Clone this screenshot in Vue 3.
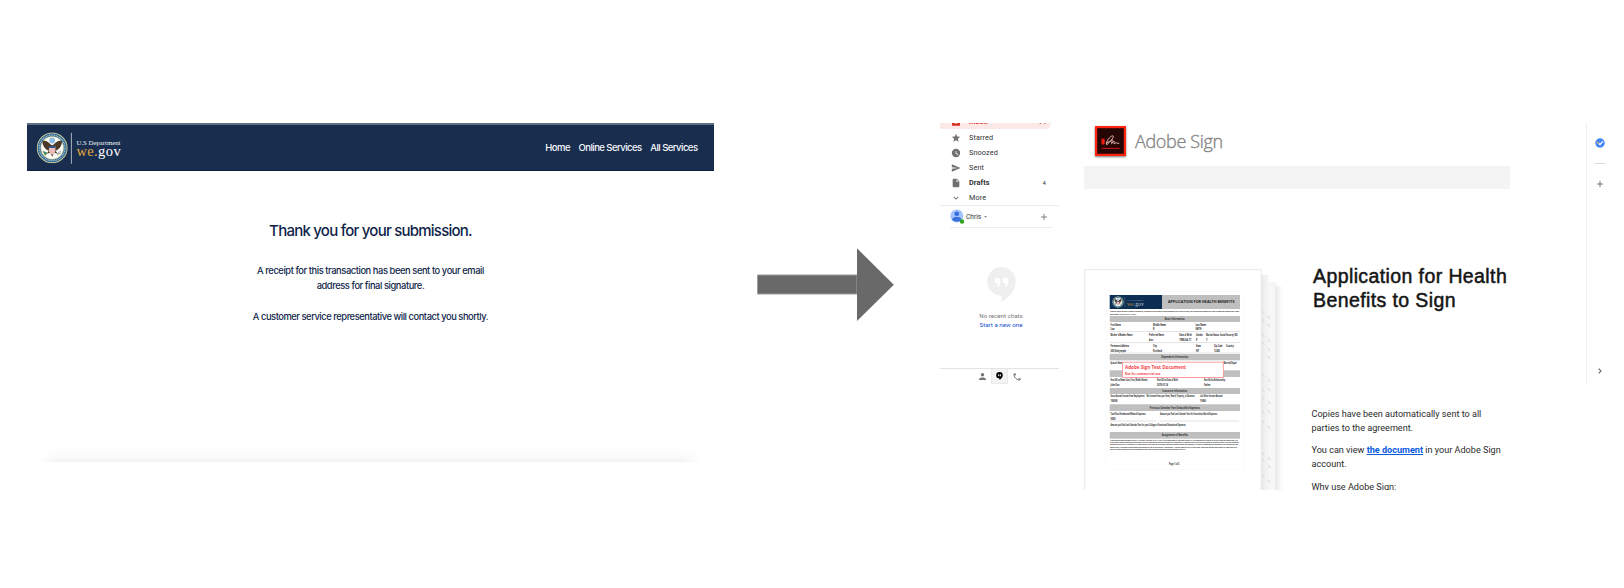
<script setup>
const folders = [
  { name: 'Starred', icon: 'M12 17.3l6.2 3.7-1.6-7L22 9.2l-7.2-.6L12 2 9.2 8.6 2 9.2 7.5 14l-1.7 7z' },
  { name: 'Snoozed', icon: 'M12 2a10 10 0 1 0 0 20 10 10 0 0 0 0-20zm4.5 14.5L11 13V7h1.8v5.2l4.5 2.7z' },
  { name: 'Sent', icon: 'M2 21l21-9L2 3v7l15 2-15 2z' },
  { name: 'Drafts', icon: 'M6 2a2 2 0 0 0-2 2v16a2 2 0 0 0 2 2h12a2 2 0 0 0 2-2V8l-6-6zm7 7V3.500l5.500 5.500z', bold: true, count: 4 },
  { name: 'More', icon: 'M7.400 8.600L12 13.200l4.600-4.600L18 10l-6 6-6-6z' },
]

// x, baseline, width, text
const labels = [
  [1110.5, 325.6, 10.5, 'First Name'],
  [1153, 325.6, 13, 'Middle Name'],
  [1195.5, 325.600, 10.500, 'Last Name'],
  [1110.5, 330, 4, 'Lisa'],
  [1153, 330, 1.5, 'R'],
  [1195.5, 330, 6, 'SMITH'],
  [1110.5, 336.3, 22, "Mother's Maiden Name"],
  [1149, 336.3, 15, 'Preferred Name'],
  [1179.3, 336.3, 12.500, 'Date of Birth'],
  [1196, 336.3, 7, 'Gender'],
  [1206, 336.3, 13, 'Marital Status'],
  [1220, 336.3, 17.500, 'Social Security NO'],
  [1149, 341, 4, 'Ann'],
  [1179.3, 341, 12, '1980-04-11'],
  [1196, 341, 1.5, 'F'],
  [1206, 341, 1.5, '1'],
  [1110.5, 347, 18.5, 'Permanent Address'],
  [1153, 347, 4, 'City'],
  [1196, 347, 5, 'State'],
  [1214, 347, 8.500, 'Zip Code'],
  [1226, 347, 8, 'Country'],
  [1110.5, 351.700, 15.500, '200 Dalrymple'],
  [1153, 351.7, 9, 'Portland'],
  [1196, 351.7, 3, 'NY'],
  [1214, 351.7, 6, '12345'],
  [1110.5, 364.300, 12, "Spouse's Name"],
  [1223.5, 364.300, 13, 'Married/Equal'],
  [1110.5, 381, 37, 'Non-VA Ins Name (Last, First, Middle Name)'],
  [1157, 381, 21, 'Non VA Ins Date of Birth'],
  [1204, 381, 21, 'Non VA Ins Relationship'],
  [1110.5, 385.500, 9, 'John Doe'],
  [1157, 385.5, 11, '2019-01-14'],
  [1204, 385.5, 6.500, 'Father'],
  [1110.5, 397.300, 34, 'Gross Annual Income from Employment'],
  [1146.5, 397.3, 48, 'Net Income from your Farm, Ranch, Property, or Business'],
  [1200, 397.300, 22.500, 'List Other Income Amount'],
  [1110.5, 402.300, 7, '100000'],
  [1200, 402.300, 6, '10000'],
  [1110.5, 414.700, 35, 'Total Non-Reimbursed Medical Expenses'],
  [1160, 414.7, 57, 'Amount you Paid Last Calendar Year for Funeral and Burial Expenses'],
  [1110.5, 419.500, 5, '5000'],
  [1110.5, 425.5, 75, 'Amount you Paid Last Calendar Year for your College or Vocational Educational Expenses'],
]
const bars = [
  [316, 6, 'Basic Information', 20],
  [354, 6.300, 'Dependent Information', 27],
  [370.3, 6.700, '', 0],
  [388, 6, 'Insurance Information', 25],
  [404.300, 6.700, 'Previous Calendar Year Deductible Expenses', 50],
  [432, 6.700, 'Assignment of Benefits', 26],
]
const rules = [[1110, 331.6, 130], [1110, 342.600, 130], [1110, 353, 130], [1110, 421, 46], [1160, 421, 79]]
const prose = [
  [311.900, 129, 'Federal law provides criminal penalties, including a fine and/or imprisonment for up to 5 years, for concealing a material fact or making a materially false'],
  [314.600, 26, 'statement. (See 18 U.S.C. 1001)'],
  [441, 128, 'I understand that pursuant to 38 U.S.C. section 1729 and 42 U.S.C. 2651, the Department of Veterans Affairs (VA) is authorized to recover or collect from my health plan (HP)'],
  [443.200, 129, 'or any other legally responsible third party for the reasonable charges of nonservice-connected VA medical care or services furnished or provided to me. I hereby authorize'],
  [445.400, 128, 'payment directly to VA from any HP under which I am covered (including coverage provided under my spouse’s HP) that is responsible for payment of the charges for my'],
  [447.600, 127, 'medical care, including benefits otherwise payable to me or my spouse. Furthermore, I hereby assign to the VA any claim I may have against any person or entity who is or'],
  [449.800, 76, 'may be legally responsible for the payment of the cost of medical services provided to me by the VA.'],
]
const marks = [
  [1262, 313], [1262, 321], [1262, 336], [1262, 344], [1262, 376], [1262, 391], [1262, 399], [1262, 413], [1262, 422], [1262, 454], [1262, 461], [1262, 477],
  [1268, 318], [1268, 326], [1268, 341], [1268, 350], [1268, 358], [1268, 381], [1268, 390], [1268, 403], [1268, 412], [1268, 428], [1268, 459], [1268, 467], [1268, 482],
]
</script>

<template>
  <main class="board">
    <svg class="defs" width="0" height="0">
      <symbol id="seal" viewBox="0 0 32 32">
        <circle cx="16" cy="16" r="15.700" fill="#c9c69a" />
        <circle cx="16" cy="16" r="14.700" fill="#2f6a94" />
        <circle cx="16" cy="16" r="13" fill="none" stroke="#b5cdd8" stroke-width="1.300" stroke-dasharray=".9 .8" />
        <circle cx="16" cy="16" r="11.600" fill="#fdfdfa" stroke="#c8b878" stroke-width=".6" />
        <circle cx="16" cy="8.500" r="3" fill="#8fbce0" />
        <path d="M15 13 C12 10 10 8 6 9 C6 13 8 17 12.500 19 L10.500 22 L14 21 L16 25 L18 21 L21.500 22 L19.500 19 C24 17 26 13 26 9 C22 8 20 10 17 13z" fill="#4d3927" />
        <path d="M12.700 14h6.600v5c0 2-2 3.500-3.300 4-1.300-.5-3.300-2-3.300-4z" fill="#efbdb8" />
        <path d="M12.700 14h6.600v2.200h-6.600z" fill="#34578c" />
        <path d="M6 19l5 2-2 3z" fill="#3f8052" />
        <path d="M21 22l4-3M21 23l4-2" stroke="#8a8a86" stroke-width=".8" />
      </symbol>
      <symbol id="hangout" viewBox="0 0 29 35">
        <path d="M14.500 0a14.300 14.300 0 0 1 14.300 14.400C28.800 23 22 31 14.500 34.500V28.800A14.400 14.400 0 0 1 14.500 0z" />
        <path fill="#fff" d="M8 11h5.200v5c0 2-1.200 3.500-3.200 4v-1.800c1-.3 1.300-1 1.300-2H8zM16 11h5.200v5c0 2-1.200 3.500-3.200 4v-1.800c1-.3 1.300-1 1.300-2H16z" />
      </symbol>
    </svg>

    <section class="gov">
      <header class="bar">
        <svg class="logo" width="90" height="34" viewBox="36 130.500 90 34">
          <use href="#seal" x="36.500" y="131.700" width="31.400" height="31.400" />
          <path d="M71.400 132.300v31" stroke="#b8c1cd" stroke-width=".9" />
          <text x="76.500" y="144.500" font-size="6.600" fill="#f2f4f8" textLength="44" lengthAdjust="spacingAndGlyphs">U.S Department</text>
          <text x="76.500" y="155.700" font-size="14.500" fill="#e4a93d" textLength="21">we.</text>
          <text x="98" y="155.700" font-size="14.500" fill="#fff" textLength="22.700">gov</text>
        </svg>
        <nav>
          <a>Home</a><a>Online Services</a><a>All Services</a>
        </nav>
      </header>
      <div class="message">
        <h1>Thank you for your submission.</h1>
        <p class="receipt">A receipt for this transaction has been sent to your email<br /><span>address for final signature.</span></p>
        <p class="rep">A customer service representative will contact you shortly.</p>
      </div>
      <div class="fade"></div>
    </section>

    <svg class="arrow" width="137" height="74" viewBox="757 247.500 137 74">
      <path d="M757.500 274.500H857v19H757.500z" fill="#696969" stroke="#9c9c9c" stroke-width="1" />
      <path d="M857 247.800L893.800 284.200 857 320.600z" fill="#696969" />
    </svg>

    <aside class="mail">
      <div class="inbox">
        <svg width="8" height="3"><path d="M0 0h8v2.200q0 .5-.5.500h-7Q0 2.700 0 2.200z" fill="#d93025" /><path d="M2.700 0h2.600q-1.300 1.400-2.600 0z" fill="#fff" /></svg>
        <b>Inbox</b><b class="n">74</b>
      </div>
      <div v-for="f in folders" :key="f.name" class="folder" :class="{ bold: f.bold }">
        <svg width="10" height="10" viewBox="0 0 24 24"><path :d="f.icon" fill="#717171" fill-rule="evenodd" /></svg>
        <span>{{ f.name }}</span><i v-if="f.count">{{ f.count }}</i>
      </div>
      <div class="user">
        <svg width="14" height="15" viewBox="950 208.500 14 15">
          <circle cx="956.800" cy="215.400" r="6.500" fill="#a2c3fb" />
          <circle cx="956.800" cy="213.300" r="2.400" fill="#3970dd" />
          <path d="M952.200 219.600c0-2.700 2.500-3 4.600-3s4.600.3 4.600 3c-2.500 2.300-6.700 2.300-9.200 0z" fill="#3970dd" />
          <circle cx="962" cy="221" r="2.200" fill="#2fa81f" />
        </svg>
        <span>Chris</span>
        <svg class="caret" width="3" height="2"><path d="M0 0h3L1.500 1.800z" fill="#888" /></svg>
        <svg class="add" width="6" height="6"><path d="M3 0v6M0 3h6" stroke="#777" stroke-width=".9" /></svg>
      </div>
      <div class="chats">
        <svg width="29" height="35" fill="#efefef"><use href="#hangout" width="29" height="35" /></svg>
        <p>No recent chats</p>
        <a>Start a new one</a>
      </div>
      <div class="tabs">
        <span><svg width="7" height="7" viewBox="4 4 16 16"><path d="M12 12a4 4 0 1 0 0-8 4 4 0 0 0 0 8zm0 2c-2.700 0-8 1.300-8 4v2h16v-2c0-2.700-5.300-4-8-4z" fill="#757575" /></svg></span>
        <span class="on"><svg width="7" height="8"><use href="#hangout" width="7" height="8" /></svg></span>
        <span><svg width="8" height="8" viewBox="0 0 8 8"><path d="M1.500.8C.5 2 1 3.500 2.700 5.200S6 7.500 7.200 6.500" fill="none" stroke="#757575" stroke-width="1" /><path d="M1.300.5l1.300 1.800M5.700 5.300l1.800 1.300" stroke="#757575" stroke-width="1.600" /></svg></span>
      </div>
    </aside>

    <section class="adobe">
      <div class="brand">
        <svg width="31" height="30" viewBox="0 0 31 30">
          <path d="M0 0h31v30H0z" fill="#ff2410" /><path d="M2.200 2.200h26.600v25.600H2.200z" fill="#260605" />
          <path d="M6.500 12.800H9.700V17.500L8.100 19 6.500 17.500z" fill="#ee1b13" />
          <path d="M11.500 18.500C11 15.500 15 10 17.700 9.800c2 .2-1 4.200-3 6.200l-2.500 2.300c-1 .6-1.500-1.800.8-2.200 2-.3 3.500-2.600 4.300-2.300.5.500-1.300 3.500-.6 3.800.6 0 1.500-2.700 2.300-2.600.6.300-.5 2.800.2 2.800s1.200-1.200 2-1.100c.6.200.5.700 3 .7" fill="none" stroke="#f2c5c0" stroke-width=".9" />
          <path d="M6.800 22.400h17.800" stroke="#e01c14" stroke-width=".9" />
        </svg>
        <span>Adobe Sign</span>
      </div>
      <div class="band"></div>
      <div class="agreement">
        <svg class="paper" width="204" height="224" viewBox="1082 266 204 224">
          <defs>
            <linearGradient id="edge"><stop offset="0" stop-color="#e3e3e3" /><stop offset="1" stop-color="#fff" /></linearGradient>
            <linearGradient id="fold"><stop offset="0" stop-color="#e6e6e6" /><stop offset="1" stop-color="#f8f8f8" /></linearGradient>
            <filter id="soft" x="-50%" width="200%"><feGaussianBlur stdDeviation="1.2" /></filter>
          </defs>
          <path d="M1274 286h8.500v210h-8.500z" fill="url(#edge)" filter="url(#soft)" />
          <path d="M1262 283h13.500v210H1262z" fill="#f7f7f7" stroke="#ededed" stroke-width=".7" />
          <path d="M1261 275.500h6.500v218h-6.500z" fill="url(#fold)" stroke="#ececec" stroke-width=".6" />
          <path v-for="m in marks" :key="m.join()" :d="`M${m[0]} ${m[1] - 2}l2.300 3`" stroke="#dadada" stroke-width="1.100" />
          <path d="M1084.700 269.700h176.500V492H1084.700z" fill="#fff" stroke="#e9e9e9" />
          <path d="M1106 291.500h137.500V469H1106z" fill="#fff" stroke="#fafafa" />
          <path d="M1109.700 295H1162v14h-52.300z" fill="#0d2e53" />
          <path d="M1162 295h78v14h-78z" fill="#bfbfbf" />
          <use href="#seal" x="1112.200" y="296.200" width="11.600" height="11.600" />
          <path d="M1124.700 297v10" stroke="#8492a5" stroke-width=".3" />
          <text class="serif" x="1127" y="301.300" font-size="2.500" fill="#94a0b0" textLength="16.500">U.S Department</text>
          <text class="serif" x="1127" y="305.500" font-size="5.500" fill="#b98b39" textLength="8">we.</text>
          <text class="serif" x="1135.200" y="305.500" font-size="5.500" fill="#cbd2dc" textLength="8.500">gov</text>
          <text x="1168" y="303.300" font-size="4.200" font-weight="700" fill="#222" textLength="66.500" lengthAdjust="spacingAndGlyphs">APPLICATION FOR HEALTH BENEFITS</text>
          <g v-for="b in bars" :key="b[0]">
            <rect x="1109.700" :y="b[0]" width="130.300" :height="b[1]" fill="#bfbfbf" />
            <text v-if="b[2]" :x="1174.800 - b[3] / 2" :y="b[0] + 4.200" font-size="2.800" font-weight="700" fill="#333" :textLength="b[3]" lengthAdjust="spacingAndGlyphs">{{ b[2] }}</text>
          </g>
          <path v-for="r in rules" :key="r.join()" :d="`M${r[0]} ${r[1]}h${r[2]}`" stroke="#c4c4c4" stroke-width=".5" />
          <text v-for="(l, i) in labels" :key="i" :x="l[0]" :y="l[1]" font-size="2.800" font-weight="700" fill="#222" :textLength="l[2]" lengthAdjust="spacingAndGlyphs">{{ l[3] }}</text>
          <text v-for="p in prose" :key="p[0]" x="1110" :y="p[0]" font-size="2.300" font-weight="700" fill="#222" :textLength="p[1]" lengthAdjust="spacingAndGlyphs">{{ p[2] }}</text>
          <text x="1169" y="465.400" font-size="2.700" font-weight="700" fill="#333" textLength="10.500" lengthAdjust="spacingAndGlyphs">Page 1 of 2</text>
          <rect x="1122.500" y="362.200" width="100.800" height="15.300" fill="#fff" stroke="#ff8a8a" stroke-width=".8" />
          <text x="1125" y="368.900" font-size="4.700" font-weight="700" fill="#f4474c" textLength="61" lengthAdjust="spacingAndGlyphs">Adobe Sign Test Document</text>
          <text x="1125" y="374.600" font-size="3.200" font-weight="700" fill="#f4474c" textLength="35.500" lengthAdjust="spacingAndGlyphs">Not for commercial use</text>
        </svg>
        <div class="copy">
          <h2>Application for Health<br /><span>Benefits to Sign</span></h2>
          <p>Copies have been automatically sent to all<br />parties to the agreement.</p>
          <p>You can view <a>the document</a> in your Adobe Sign<br />account.</p>
          <p>Why use Adobe Sign:</p>
        </div>
      </div>
    </section>

    <aside class="rail">
      <svg width="10" height="10"><circle cx="5" cy="5" r="4.700" fill="#4285f4" /><path d="M3.800 5.400l1.200 1.200 2.800-3.200" fill="none" stroke="#fff" stroke-width="1.400" /><circle cx="2.700" cy="4.700" r=".9" fill="#f0bd42" /></svg>
      <hr />
      <svg width="6" height="6"><path d="M3 0v6M0 3h6" stroke="#666" stroke-width=".9" /></svg>
      <svg class="next" width="4" height="6"><path d="M.7.700L3 3 .7 5.300" fill="none" stroke="#666" stroke-width="1.100" /></svg>
    </aside>
  </main>
</template>

<style>
body { background: #fff; }
</style>

<style scoped>
.board { width: 1624px; height: 588px; display: flex; align-items: flex-start; box-sizing: border-box; padding: 123px 0 0 27px; background: #fff; overflow: hidden; }
.defs { position: absolute; }
svg { display: block; flex: none; }
h1, h2, p { margin: 0; }
.gov { width: 687px; height: 339px; flex: none; display: flex; flex-direction: column; font-family: "Inter", "Liberation Sans", sans-serif; color: #101f4a; }
.bar { height: 48px; box-sizing: border-box; background: #192e4f; border-top: 2px solid #5f6f85; border-bottom: 1px solid #0b2244; display: flex; align-items: center; justify-content: space-between; padding: 0 16.5px 0 9px; }
.logo text, .serif { font-family: "Liberation Serif", serif; }
nav { display: flex; gap: 8.500px; font: 500 9.500px/14px "Inter", sans-serif; letter-spacing: -.53px; color: #f7f9fc; padding-top: 1px; }
.message { text-align: center; white-space: nowrap; flex: 1; }
h1 { font-size: 15px; line-height: 20px; margin-top: 50px; font-weight: 500; letter-spacing: -.76px; }
p { font-size: 9.300px; line-height: 15.300px; }
.receipt { margin-top: 22px; font-weight: 500; letter-spacing: -.41px; }
.rep { margin-top: 15.300px; font-weight: 500; letter-spacing: -.43px; }
.fade { height: 16px; margin: 0 12px 0 12px; background: linear-gradient(to right, #fff, transparent 3%, transparent 97%, #fff), linear-gradient(#fff, #fafafa 70%, #f2f2f2); }
.arrow { margin: 124.500px 0 0 43px; }
.mail { width: 119px; margin-left: 46px; font-family: Roboto, sans-serif; flex: none; color: #333; }
.inbox { height: 6px; width: 111px; background: #fce8e6; border-radius: 0 0 7px 0; overflow: hidden; display: flex; font-size: 7.500px; line-height: 2px; color: #d93025; box-sizing: border-box; padding: 0 5px 0 12px; }
.inbox b { margin-left: 9px; margin-top: -2px; }
.inbox .n { margin-left: auto; font-size: 6px; }
.folder { height: 15.050px; display: flex; align-items: center; font-size: 7.300px; padding-left: 11px; padding-right: 13px; letter-spacing: .1px; }
.inbox + .folder { margin-top: 1px; }
.folder span { margin-left: 8px; }
.folder i { margin-left: auto; font-style: normal; font-size: 6px; }
.bold { font-weight: 700; }
.bold i { font-weight: 400; }
.user { border-top: 1px solid #ececec; height: 21px; display: flex; align-items: center; padding: 0 12px 0 10px; font-size: 6.600px; position: relative; }
.user span { margin-left: 2px; }
.caret { margin-left: 3px; }
.add { margin-left: auto; }
.chats { border-top: 1px solid #ececec; margin: 0 7px 0 10px; height: 141px; box-sizing: border-box; padding-top: 39px; display: flex; flex-direction: column; align-items: center; font-size: 6.200px; line-height: 9px; }
.chats p { font-size: 6.200px; line-height: 9px; color: #777; margin-top: 10px; }
.chats a { color: #1a52d0; }
.tabs { border-top: 1px solid #e4e4e4; height: 16px; display: flex; justify-content: center; }
.tabs span { width: 17px; height: 15px; display: grid; place-items: center; }
.tabs .on { background: #f3f3f3; border: 1px solid #eaeaea; border-top: 0; box-sizing: border-box; }
.adobe { width: 426px; height: 367px; margin-left: 25px; overflow: hidden; flex: none; display: flex; flex-direction: column; }
.brand { height: 43px; flex: none; display: flex; align-items: flex-start; padding: 2.500px 0 0 11px; box-sizing: border-box; }
.brand svg { box-shadow: 0 1px 2px #777; }
.brand span { margin-left: 9px; font: 300 18px/24px "Open Sans", "Noto Sans", sans-serif; color: #858585; -webkit-text-stroke: .35px #858585; margin-top: 3px; letter-spacing: -.35px; }
.band { height: 23px; background: #f4f4f4; flex: none; }
.agreement { display: flex; margin: 77px 0 0 -2px; white-space: nowrap; }
.paper text { font-family: "Open Sans", "Noto Sans", sans-serif; }
.paper .serif { font-family: "Liberation Serif", serif; }
.copy { margin-left: 25.500px; margin-top: -2px; font-family: Roboto, sans-serif; color: #2b2b2b; }
h2 { font: 400 19.500px/24px "Liberation Sans", sans-serif; -webkit-text-stroke: .5px #151515; color: #151515; letter-spacing: .4px; margin: 0 0 96px 1.500px; height: 48px; }
.copy p { font-size: 9.100px; line-height: 13.500px; margin-bottom: 9.300px; }
.copy a { color: #0a5be0; font-weight: 700; text-decoration: underline; }
.rail { width: 27px; height: 261px; box-sizing: border-box; margin-left: 76px; border-left: 1px solid #efefef; flex: none; display: flex; flex-direction: column; align-items: center; padding: 14.500px 0 10px; }
.rail hr { width: 10px; border: 0; border-top: 1px solid #ddd; margin: 15px 0 17px; }
.next { margin-top: auto; }
</style>
